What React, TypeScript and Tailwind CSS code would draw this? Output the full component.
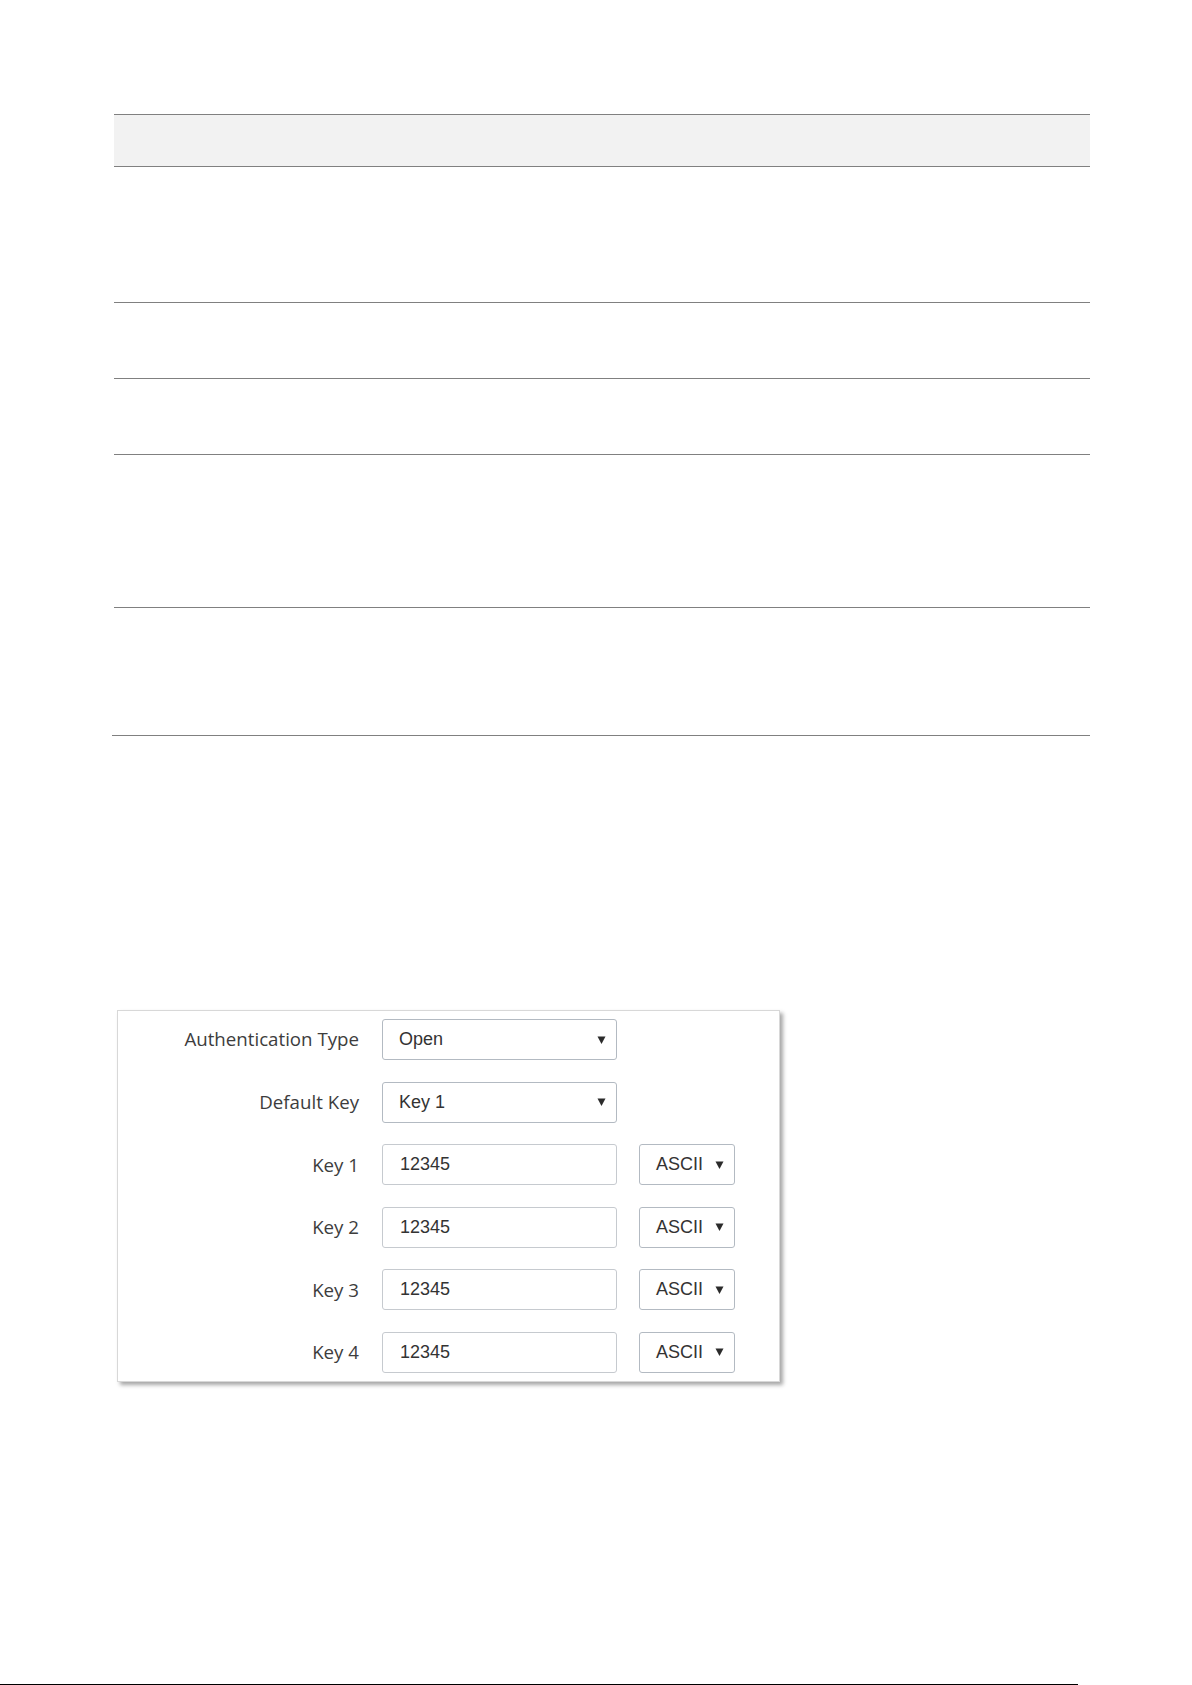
import React from 'react';

interface KeyRow {
  label: string;
  value: string;
  format: string;
}

const keyRows: KeyRow[] = [
  { label: 'Key 1', value: '12345', format: 'ASCII' },
  { label: 'Key 2', value: '12345', format: 'ASCII' },
  { label: 'Key 3', value: '12345', format: 'ASCII' },
  { label: 'Key 4', value: '12345', format: 'ASCII' },
];

const Arrow: React.FC = () => (
  <svg width="9" height="8" viewBox="0 0 9 8" className="shrink-0">
    <path d="M0.5 0.5 H8.5 L4.5 8 Z" fill="#2b2b2b" />
  </svg>
);

const SelectBox: React.FC<{ value: string; width: string }> = ({ value, width }) => (
  <div
    className={`${width} h-[41px] flex items-center justify-between pl-[16px] pr-[10px] border border-[#b3bac2] rounded-[3px] bg-white text-[18px] text-[#333] font-['Liberation_Sans',Arial,sans-serif]`}
  >
    <span>{value}</span>
    <Arrow />
  </div>
);

const Field: React.FC<{ label: string; children: React.ReactNode }> = ({ label, children }) => (
  <div className="flex items-center h-[41px]">
    <div className="w-[241px] text-right text-[18.7px] text-[#3d3d3d] font-['Open_Sans',sans-serif]">
      {label}
    </div>
    <div className="flex items-center ml-[23px] gap-[22px]">{children}</div>
  </div>
);

const App: React.FC = () => {
  return (
    <div className="h-[1685px] flex flex-col bg-white pt-[114px]">
      {/* empty table */}
      <div className="ml-[114px] w-[976px]">
        <div className="h-[53px] bg-[#f2f2f2] border-t border-b border-[#808080]" />
        <div className="h-[136px] border-b border-[#808080]" />
        <div className="h-[76px] border-b border-[#808080]" />
        <div className="h-[76px] border-b border-[#808080]" />
        <div className="h-[153px] border-b border-[#808080]" />
        <div className="h-[127px]" />
        <div className="-ml-[2px] w-[978px] h-px bg-[#808080]" />
      </div>

      {/* WEP settings panel */}
      <div className="mt-[274px] ml-[117px] w-[663px] border border-[#d8d8d8] bg-white shadow-[3px_3px_4px_rgba(0,0,0,0.35)] py-[8px] flex flex-col gap-[21.6px]">
        <Field label="Authentication Type">
          <SelectBox value="Open" width="w-[235px]" />
        </Field>
        <Field label="Default Key">
          <SelectBox value="Key 1" width="w-[235px]" />
        </Field>
        {keyRows.map((row) => (
          <Field key={row.label} label={row.label}>
            <div className="w-[235px] h-[41px] flex items-center pl-[17px] border border-[#c6cacf] rounded-[3px] text-[18px] text-[#333] font-['Liberation_Sans',Arial,sans-serif]">
              {row.value}
            </div>
            <SelectBox value={row.format} width="w-[96px]" />
          </Field>
        ))}
      </div>

      <div className="mt-auto w-[1078px] h-px bg-black" />
    </div>
  );
};

export default App;
